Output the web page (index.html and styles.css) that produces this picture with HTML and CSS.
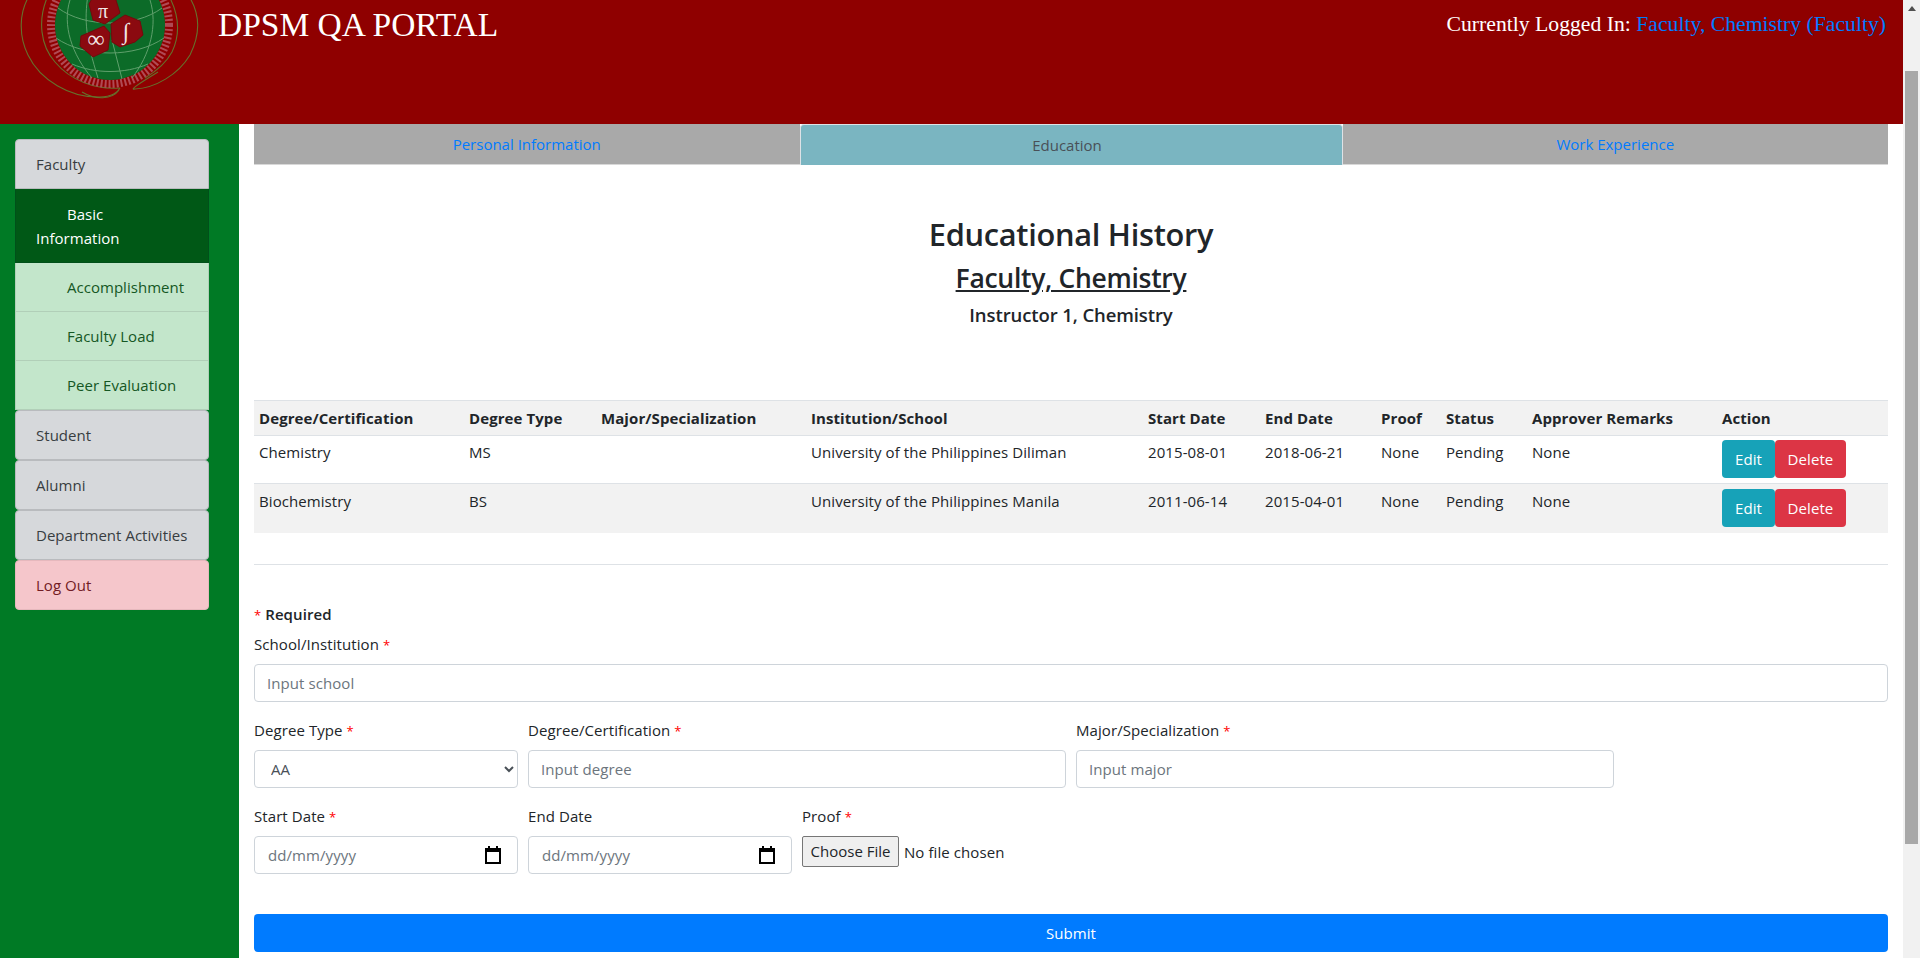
FILE: index.html
```html
<!DOCTYPE html>
<html>
<head>
  <title>DPSM QA Portal</title>
  <link rel="stylesheet" href="styles.css">
</head>
<body>

  <div class="page">
    <header class="topbar">
      <svg class="logo" viewBox="0 0 210 110" width="210" height="110">
        <g fill="none" stroke="#66702c" stroke-width="1.1">
          <path d="M28 -2 C20 12 18 35 28 55 C40 80 70 98 100 97 C112 97 118 92 120 88"/>
          <path d="M47 -2 C38 20 40 45 55 62 C70 80 95 90 120 88"/>
          <path d="M190 -2 C200 15 200 35 190 55 C178 75 155 88 135 89 C130 90 135 86 158 72"/>
          <path d="M170 -2 C180 18 180 35 172 52 C165 65 155 72 145 78"/>
          <path d="M82 92 C95 100 112 100 119 90"/>
        </g>
        <circle cx="110" cy="25" r="59" fill="none" stroke="#b04a54" stroke-width="8" stroke-dasharray="2 2"/>
        <circle cx="110" cy="25" r="55" fill="#0c6b28"/>
        <g fill="none" stroke="#5fa06c" stroke-width="1">
          <path d="M58 8 C85 28 135 28 162 8 M56 38 C85 58 135 58 164 38 M72 64 C95 74 125 74 148 64"/>
          <path d="M112 40 L122 79 M70 0 C62 25 72 55 92 78 M150 0 C158 25 150 55 132 78 M88 -5 C84 20 86 40 98 78"/>
        </g>
        <g fill="#8b0a10" stroke="#730a0c">
          <polygon points="89,4 93,-3 115,-3 120,13 105,24 93,20"/>
          <polygon points="81,36 104,26 110,33 108,50 93,57 80,46"/>
          <polygon points="111,24 125,15 140,21 143,35 135,42 120,47 112,42"/>
        </g>
        <text class="logo-sym" x="103" y="18" text-anchor="middle" font-size="20">π</text>
        <text class="logo-sym" x="96" y="47" text-anchor="middle" font-size="24">∞</text>
        <text class="logo-sym" x="126" y="39" text-anchor="middle" font-size="23">∫</text>
      </svg>
      <div class="brand">DPSM QA PORTAL</div>
      <div class="whoami">Currently Logged In: <a href="#">Faculty, Chemistry (Faculty)</a></div>
    </header>

    <div class="layout">
      <nav class="sidebar">
        <div class="menu">
          <a class="menu-item top-first" href="#">Faculty</a>
          <a class="menu-item sub active" href="#">Basic<br>Information</a>
          <a class="menu-item sub light" href="#">Accomplishment</a>
          <a class="menu-item sub light" href="#">Faculty Load</a>
          <a class="menu-item sub light" href="#">Peer Evaluation</a>
          <a class="menu-item" href="#">Student</a>
          <a class="menu-item" href="#">Alumni</a>
          <a class="menu-item" href="#">Department Activities</a>
          <a class="menu-item logout" href="#">Log Out</a>
        </div>
      </nav>

      <main class="content">
        <div class="tabs">
          <a class="tab" href="#">Personal Information</a>
          <a class="tab current" href="#">Education</a>
          <a class="tab" href="#">Work Experience</a>
        </div>

        <div class="heading">
          <h1>Educational History</h1>
          <h2>Faculty, Chemistry</h2>
          <h3>Instructor 1, Chemistry</h3>
        </div>

        <table class="history">
          <colgroup>
            <col class="c-degree"><col class="c-type"><col class="c-major"><col class="c-school"><col class="c-start">
            <col class="c-end"><col class="c-proof"><col class="c-status"><col class="c-remarks"><col>
          </colgroup>
          <thead>
            <tr>
              <th>Degree/Certification</th>
              <th>Degree Type</th>
              <th>Major/Specialization</th>
              <th>Institution/School</th>
              <th>Start Date</th>
              <th>End Date</th>
              <th>Proof</th>
              <th>Status</th>
              <th>Approver Remarks</th>
              <th>Action</th>
            </tr>
          </thead>
          <tbody>
            <tr>
              <td>Chemistry</td>
              <td>MS</td>
              <td></td>
              <td>University of the Philippines Diliman</td>
              <td>2015-08-01</td>
              <td>2018-06-21</td>
              <td>None</td>
              <td>Pending</td>
              <td>None</td>
              <td class="actions"><button class="btn edit">Edit</button><button class="btn delete">Delete</button></td>
            </tr>
            <tr class="striped">
              <td>Biochemistry</td>
              <td>BS</td>
              <td></td>
              <td>University of the Philippines Manila</td>
              <td>2011-06-14</td>
              <td>2015-04-01</td>
              <td>None</td>
              <td>Pending</td>
              <td>None</td>
              <td class="actions"><button class="btn edit">Edit</button><button class="btn delete">Delete</button></td>
            </tr>
          </tbody>
        </table>

        <hr class="divider">

        <form class="entry">
          <p class="required-note"><span class="star">*</span> Required</p>

          <div class="field full">
            <label>School/Institution <span class="star">*</span></label>
            <input class="control" type="text" placeholder="Input school">
          </div>

          <div class="form-row">
            <div class="field w-small">
              <label>Degree Type <span class="star">*</span></label>
              <select class="control">
                <option>AA</option>
                <option>BS</option>
                <option>MS</option>
              </select>
            </div>
            <div class="field w-large">
              <label>Degree/Certification <span class="star">*</span></label>
              <input class="control" type="text" placeholder="Input degree">
            </div>
            <div class="field w-large">
              <label>Major/Specialization <span class="star">*</span></label>
              <input class="control" type="text" placeholder="Input major">
            </div>
          </div>

          <div class="form-row">
            <div class="field w-small">
              <label>Start Date <span class="star">*</span></label>
              <div class="control date">
                <span>dd/mm/yyyy</span>
                <svg viewBox="0 0 16 18" width="16" height="18"><path d="M3 0h2v2h6V0h2v2h3v16H0V2h3zM2 6v10h12V6z" fill="#000"/></svg>
              </div>
            </div>
            <div class="field w-small">
              <label>End Date</label>
              <div class="control date">
                <span>dd/mm/yyyy</span>
                <svg viewBox="0 0 16 18" width="16" height="18"><path d="M3 0h2v2h6V0h2v2h3v16H0V2h3zM2 6v10h12V6z" fill="#000"/></svg>
              </div>
            </div>
            <div class="field">
              <label>Proof <span class="star">*</span></label>
              <input class="file" type="file">
            </div>
          </div>

          <button class="submit" type="button">Submit</button>
        </form>
      </main>
    </div>
  </div>

  <div class="scrollbar">
    <div class="arrow"></div>
    <div class="thumb"></div>
  </div>

</body>
</html>
```

FILE: styles.css
```css
* {
  box-sizing: border-box;
}

body {
  margin: 0;
  height: 958px;
  overflow: hidden;
  display: flex;
  font-family: "Open Sans", "Noto Sans", sans-serif;
  font-size: 15px;
  letter-spacing: 0.08px;
  color: #212529;
  background-color: #fff;
}

a {
  color: #007bff;
  text-decoration: none;
}

.page {
  flex: 1;
  min-width: 0;
  display: flex;
  flex-direction: column;
}

/* header */
.topbar {
  height: 124px;
  flex-shrink: 0;
  background-color: #8f0000;
  display: flex;
  align-items: flex-start;
}

.logo {
  flex-shrink: 0;
  display: block;
}

.logo-sym {
  fill: #f2e6e6;
  font-family: "Liberation Serif", serif;
}

.brand {
  margin: 5px 0 0 8px;
  font-family: "Liberation Serif", serif;
  font-size: 33.5px;
  line-height: 40px;
  letter-spacing: 0;
  color: #fff;
}

.whoami {
  margin: 9px 2px 0 auto;
  padding-right: 15px;
  font-family: "Liberation Serif", serif;
  font-size: 21.7px;
  line-height: 30px;
  letter-spacing: 0;
  color: #fff;
}

/* sidebar */
.layout {
  flex: 1;
  display: flex;
  min-height: 0;
}

.sidebar {
  width: 239px;
  flex-shrink: 0;
  background-color: #007a25;
  padding: 15px 30px 0 15px;
}

.menu-item {
  display: block;
  padding: 12px 20px;
  line-height: 24px;
  white-space: nowrap;
  letter-spacing: 0.03px;
  color: #383d41;
  background-color: #d6d8db;
  border: 1px solid #b9bbbe;
  border-radius: 4px;
}

.menu-item.sub {
  border-radius: 0;
  text-indent: 31px;
  border-width: 0 1px 1px;
}

.menu-item.active {
  padding-top: 13px;
  color: #fff;
  background-color: #005816;
  border-color: #00501a;
}

.menu-item.light {
  color: #155724;
  background-color: #c3e6cb;
  border-color: #b1cfb8;
}

.menu-item.logout {
  color: #721c24;
  background-color: #f5c6cb;
  border-color: #e6b8bd;
}

.menu-item.top-first {
  border-radius: 4px 4px 0 0;
}

/* main column */
.content {
  flex: 1;
  min-width: 0;
  padding: 0 15px;
}

.tabs {
  display: flex;
  height: 41px;
}

.tab {
  flex: 1;
  padding-top: 1px;
  text-align: center;
  line-height: 39px;
  letter-spacing: 0;
  background-color: #a9a9a9;
  border-bottom: 1px solid #d8d8d8;
}

.tab.current {
  flex: 0 0 543px;
  padding-top: 0;
  line-height: 40px;
  text-indent: -8px;
  color: #495057;
  background-color: #7ab5c1;
  border: 1px solid #dee2e6;
  border-bottom: 0;
  border-radius: 4px 4px 0 0;
}

.heading {
  text-align: center;
  padding-top: 48px;
  height: 235px;
}

.heading h1 {
  margin: 0;
  font-size: 30.8px;
  font-weight: 600;
  line-height: 42px;
  letter-spacing: -0.3px;
}

.heading h2 {
  margin: 5px 0 0;
  font-size: 26.5px;
  font-weight: 600;
  line-height: 36px;
  letter-spacing: -0.3px;
  text-decoration: underline;
}

.heading h3 {
  margin: 4px 0 0;
  font-size: 18.5px;
  font-weight: 600;
  line-height: 30px;
  letter-spacing: -0.1px;
}

/* table */
.history {
  width: 100%;
  table-layout: fixed;
  border-collapse: collapse;
}

.c-degree { width: 210px; }
.c-type { width: 132px; }
.c-major { width: 210px; }
.c-school { width: 337px; }
.c-start { width: 117px; }
.c-end { width: 116px; }
.c-proof { width: 65px; }
.c-status { width: 86px; }
.c-remarks { width: 190px; }

.history th {
  text-align: left;
  font-weight: 700;
  padding: 5px;
  height: 35px;
  line-height: 24px;
  background-color: #f2f2f2;
  border-top: 1px solid #dee2e6;
  border-bottom: 1px solid #dee2e6;
}

.history td {
  padding: 4px 5px 5px;
  height: 48px;
  vertical-align: top;
  line-height: 24px;
  border-top: 1px solid #dee2e6;
}

.history .striped td {
  height: 49px;
  padding-top: 5px;
  background-color: #f2f2f2;
}

.history .actions {
  white-space: nowrap;
}

.btn {
  height: 38px;
  padding: 0;
  border: 0;
  border-radius: 4px;
  color: #fff;
  font-family: inherit;
  font-size: 15px;
  letter-spacing: inherit;
}

.edit {
  width: 53px;
  background-color: #17a2b8;
}

.delete {
  width: 71px;
  background-color: #dc3545;
}

.divider {
  margin: 31px 0 37px;
  border: 0;
  border-top: 1px solid #dee2e6;
}

/* form */
.required-note {
  margin: 0 0 5px;
  font-weight: 600;
  line-height: 24px;
}

.star {
  color: #f00;
  font-size: 13px;
  font-weight: 400;
}

.field label {
  display: block;
  height: 32px;
  line-height: 24px;
}

.control {
  display: block;
  width: 100%;
  height: 38px;
  padding: 0 12px;
  font-family: inherit;
  font-size: 15px;
  letter-spacing: inherit;
  color: #495057;
  background-color: #fff;
  border: 1px solid #ced4da;
  border-radius: 4px;
}

.control::placeholder {
  color: #6c757d;
}

.full,
.form-row {
  margin-bottom: 16px;
}

.form-row {
  display: flex;
  gap: 10px;
}

.w-small {
  width: 264px;
}

.w-large {
  width: 538px;
}

.date {
  display: flex;
  align-items: center;
  justify-content: space-between;
  color: #6c757d;
  padding: 0 16px 0 13px;
}

.file {
  display: block;
  font-family: inherit;
  font-size: 15px;
  letter-spacing: inherit;
}

.file::file-selector-button {
  height: 31px;
  width: 97px;
  margin-right: 5px;
  padding: 0;
  font-family: inherit;
  font-size: 15px;
  color: #212529;
  background-color: #efefef;
  border: 1px solid #767676;
  border-radius: 2px;
}

.submit {
  display: block;
  width: 100%;
  height: 38px;
  margin-top: 40px;
  border: 0;
  border-radius: 4px;
  color: #fff;
  background-color: #007bff;
  font-family: inherit;
  font-size: 15px;
  letter-spacing: inherit;
}

/* scrollbar */
.scrollbar {
  width: 17px;
  flex-shrink: 0;
  background-color: #f1f1f1;
}

.arrow {
  width: 0;
  height: 0;
  margin: 6px auto 0;
  border: 4px solid transparent;
  border-top: 0;
  border-bottom: 5px solid #505050;
}

.thumb {
  height: 773px;
  margin: 60px 2px 0;
  background-color: #a8a8a8;
}
```
